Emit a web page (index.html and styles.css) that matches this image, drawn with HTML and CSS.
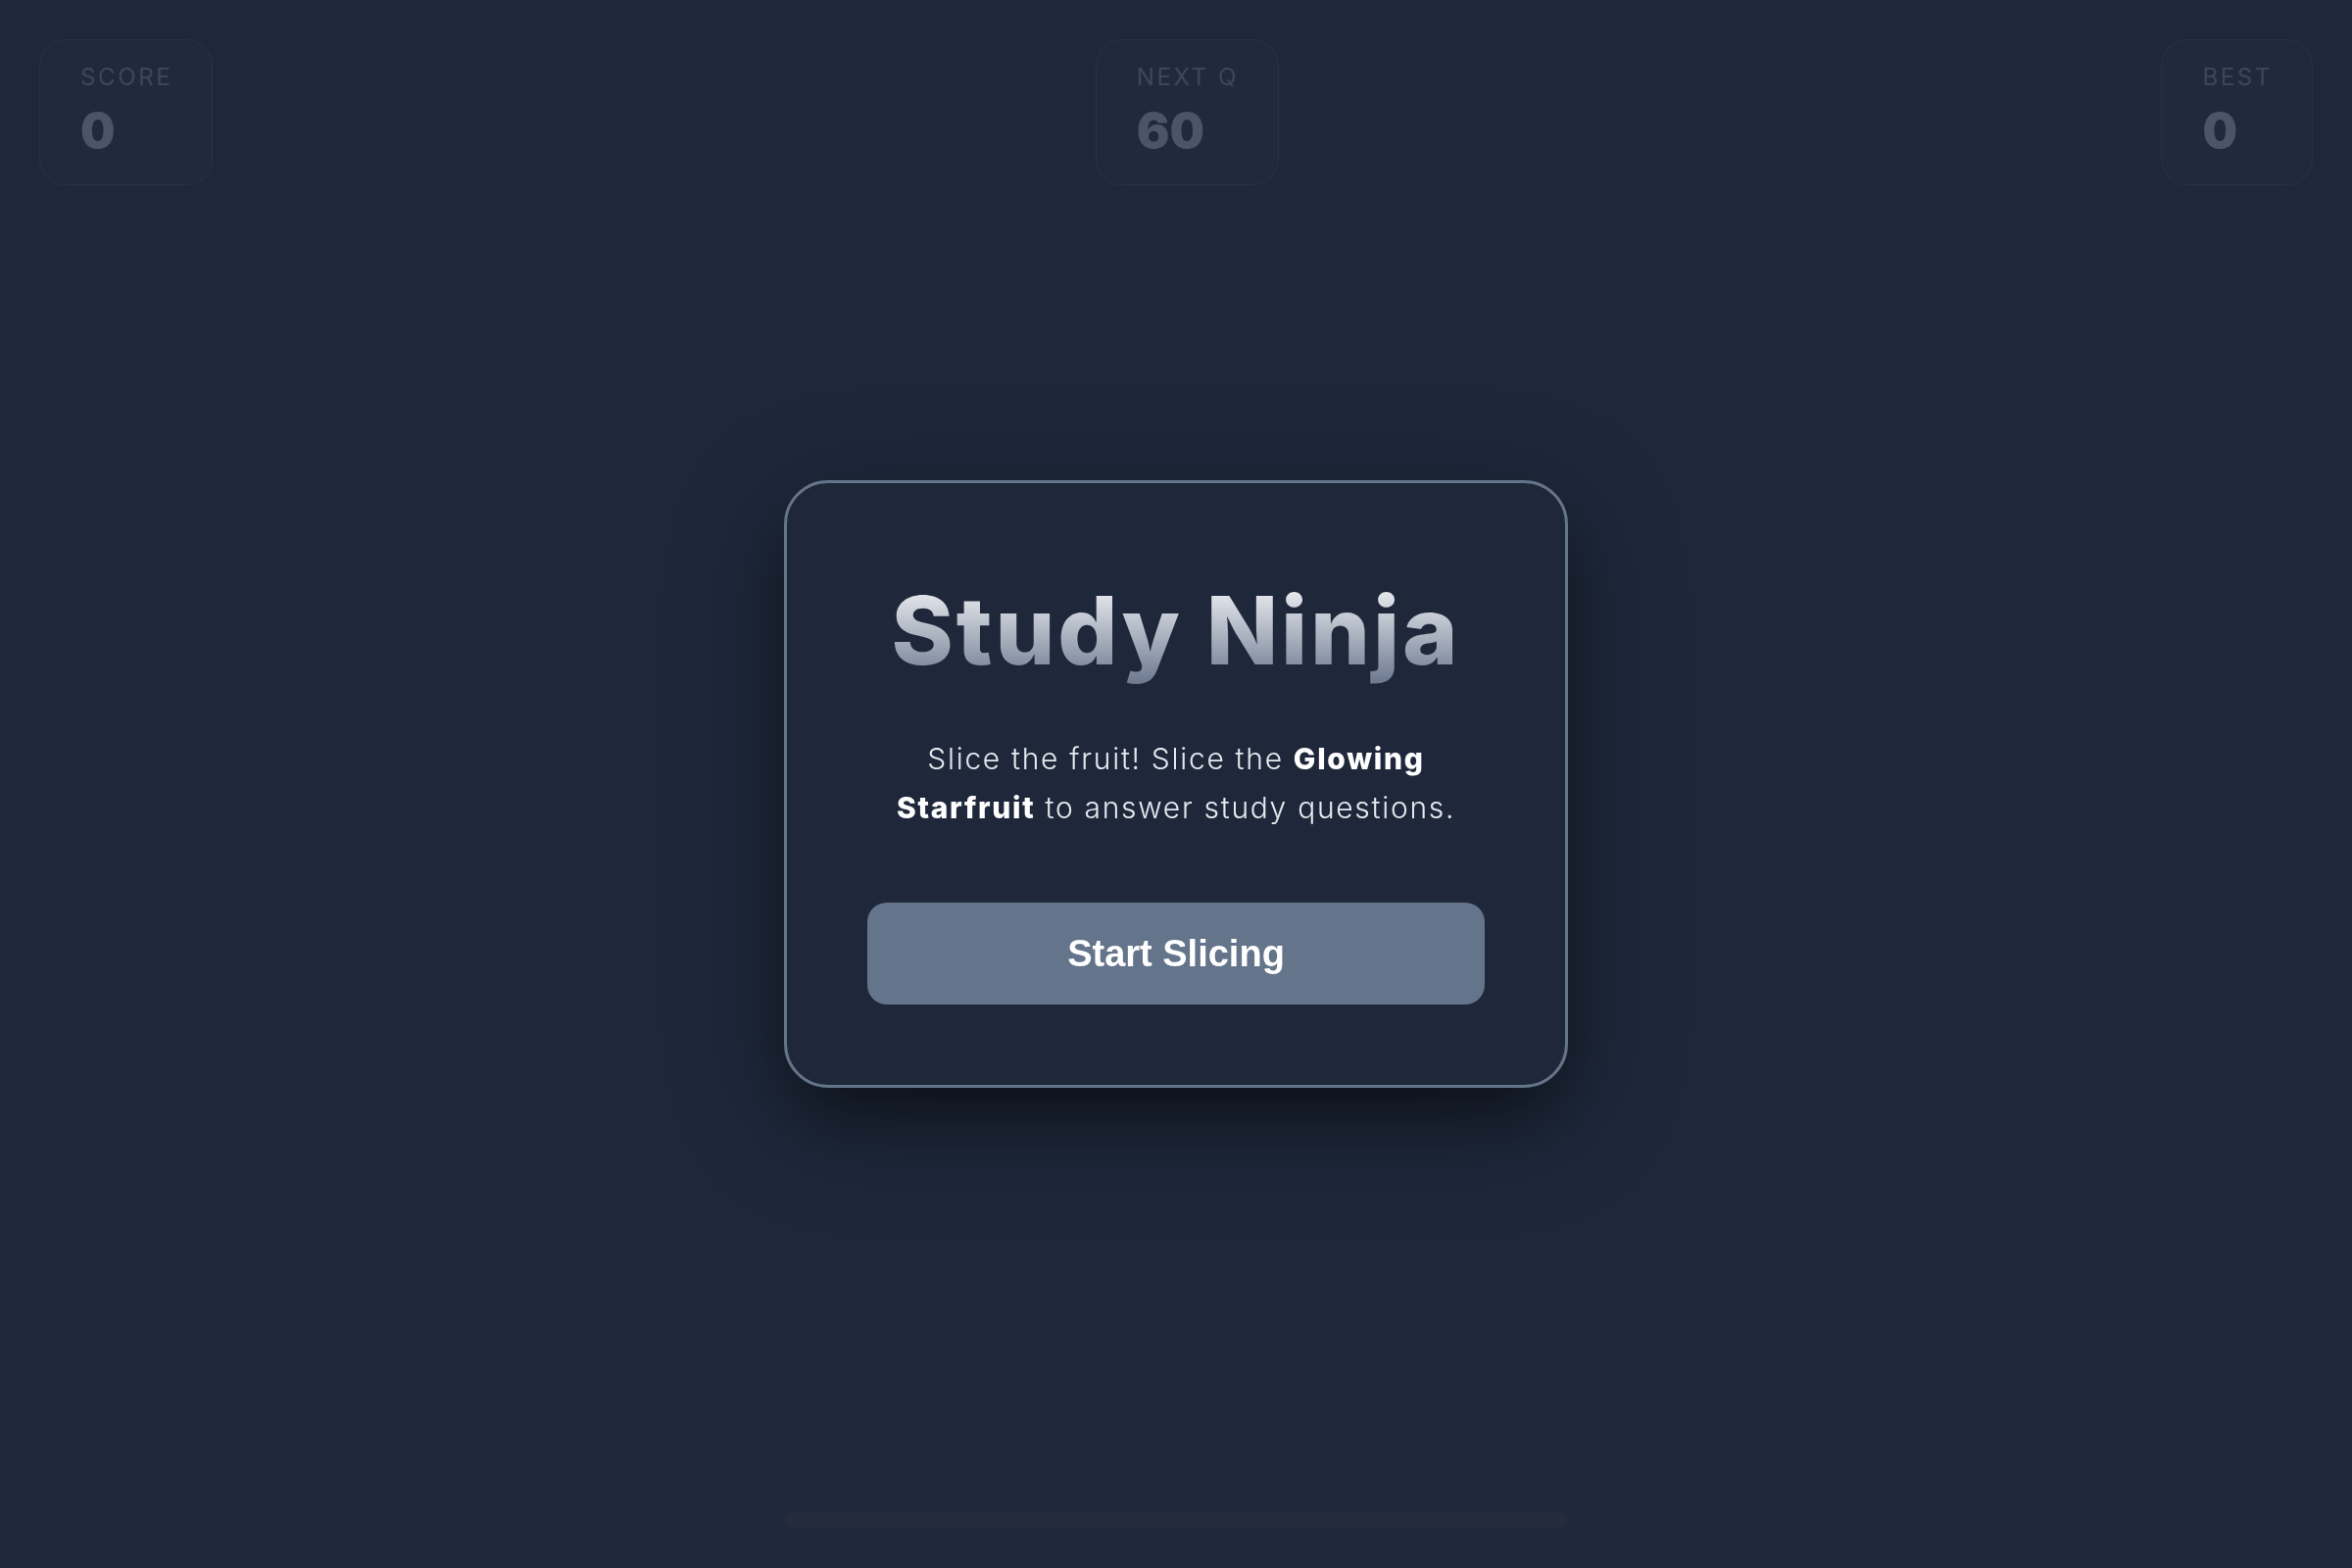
FILE: index.html
```html
<!DOCTYPE html>
<html lang="en">
<head>
<meta charset="utf-8">
<title>Study Ninja</title>
<link rel="stylesheet" href="styles.css">
</head>
<body>
<div class="game">
  <div class="hud">
    <div class="stat">
      <div class="stat-label">SCORE</div>
      <div class="stat-value">0</div>
    </div>
    <div class="stat">
      <div class="stat-label">NEXT Q</div>
      <div class="stat-value">60</div>
    </div>
    <div class="stat">
      <div class="stat-label">BEST</div>
      <div class="stat-value">0</div>
    </div>
  </div>
  <div class="bar-row">
    <div class="bar"></div>
  </div>
</div>
<div class="overlay">
  <div class="modal">
    <h1 class="title">Study Ninja</h1>
    <p class="intro">Slice the fruit! Slice the <strong>Glowing<br>Starfruit</strong> to answer study questions.</p>
    <button class="start">Start Slicing</button>
  </div>
</div>
</body>
</html>
```

FILE: styles.css
```css
html, body {
  margin: 0;
  padding: 0;
  height: 100%;
}

body {
  background: #1e283b;
  font-family: Inter, "Noto Sans", sans-serif;
  overflow: hidden;
}

.game {
  height: 100vh;
  box-sizing: border-box;
  padding: 40px;
  display: flex;
  flex-direction: column;
  justify-content: space-between;
}

.hud {
  display: flex;
  justify-content: space-between;
  align-items: flex-start;
}

.stat {
  background: #212a3c;
  border: 1px solid #283244;
  border-radius: 26px;
  padding: 20px 40px 25px 41px;
}

.stat-label {
  font-size: 24px;
  line-height: 36px;
  letter-spacing: 0.11em;
  color: #3c4759;
  font-weight: 400;
}

.stat-value {
  margin-top: 6px;
  font-size: 50px;
  line-height: 60px;
  font-weight: 900;
  color: #4a5567;
}

.bar-row {
  display: flex;
  justify-content: center;
}

.bar {
  width: 800px;
  height: 17px;
  border-radius: 9px;
  background: #232b3c;
}

.overlay {
  position: fixed;
  inset: 0;
  display: flex;
  align-items: center;
  justify-content: center;
}

.modal {
  width: 800px;
  box-sizing: border-box;
  background: #1f283b;
  border: 3px solid #64748b;
  border-radius: 45px;
  padding: 90px 82px 82px;
  text-align: center;
  box-shadow: 0 30px 120px rgba(0, 0, 0, 0.3), 0 37px 75px -18px rgba(0, 0, 0, 0.5);
}

.title {
  margin: 0;
  font-size: 96px;
  line-height: 120px;
  font-weight: 800;
  letter-spacing: 0.03em;
  background: linear-gradient(180deg, #f0f2f5 10%, #65728a 100%);
  -webkit-background-clip: text;
  background-clip: text;
  color: transparent;
}

.intro {
  margin: 46px 0 0;
  font-size: 30px;
  line-height: 50px;
  font-weight: 300;
  letter-spacing: 1.7px;
  color: #e6e9ee;
}

.intro strong {
  font-weight: 800;
  color: #ffffff;
}

.start {
  display: block;
  width: 100%;
  margin-top: 72px;
  height: 104px;
  border: none;
  border-radius: 20px;
  background: #64748b;
  color: #ffffff;
  font-family: "Liberation Sans", Arial, sans-serif;
  font-weight: 700;
  font-size: 38px;
  cursor: pointer;
}
```
